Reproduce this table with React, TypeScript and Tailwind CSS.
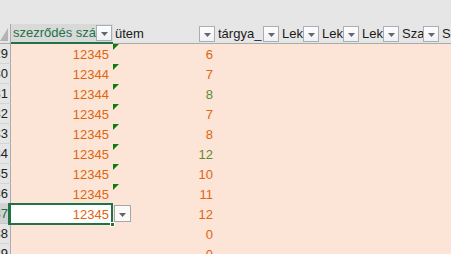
import React from 'react'

type Row = {
  num: number
  a?: string
  b: string
  bGreen?: boolean
  flag?: boolean
  selected?: boolean
}

const rows: Row[] = [
  { num: 29, a: '12345', b: '6', flag: true },
  { num: 30, a: '12344', b: '7', flag: true },
  { num: 31, a: '12344', b: '8', bGreen: true, flag: true },
  { num: 32, a: '12345', b: '7', flag: true },
  { num: 33, a: '12345', b: '8', flag: true },
  { num: 34, a: '12345', b: '12', bGreen: true, flag: true },
  { num: 35, a: '12345', b: '10', flag: true },
  { num: 36, a: '12345', b: '11', flag: true },
  { num: 37, a: '12345', b: '12', selected: true },
  { num: 38, b: '0' },
  { num: 39, b: '0' },
]

const headers = [
  { label: 'ütem', w: 'w-[103px]' },
  { label: 'tárgya_', w: 'w-[64px]' },
  { label: 'Lek', w: 'w-[40px]' },
  { label: 'Lek', w: 'w-[40px]' },
  { label: 'Lek', w: 'w-[40px]' },
  { label: 'Sza', w: 'w-[40px]' },
  { label: 'Sza', w: 'w-[40px]' },
]

const Arrow = () => (
  <svg width="7" height="4" viewBox="0 0 7 4" className="mt-[2px]">
    <polygon points="0,0 7,0 3.5,4" fill="#666666" />
  </svg>
)

const FilterButton = () => (
  <div className="flex h-[16px] w-[16px] shrink-0 items-center justify-center border border-[#a9adb4] bg-gradient-to-b from-[#fdfdfe] to-[#eef1f6]">
    <Arrow />
  </div>
)

export default function App() {
  return (
    <div
      className="h-[254px] w-[451px] overflow-hidden bg-[#e6e6e6] text-[13px] leading-none"
      style={{ fontFamily: '"Liberation Sans", Arial, sans-serif' }}
    >
      {/* strip above the table header */}
      <div className="h-[24px]" />

      {/* table header row */}
      <div className="flex h-[20px] whitespace-nowrap">
        <div className="flex w-[11px] shrink-0 items-end border-b border-r border-[#ababab] pb-[2px]">
          <svg width="8" height="13" viewBox="0 0 8 13">
            <polygon points="8,0 8,13 0,13" fill="#b4b4b4" />
          </svg>
        </div>
        <div className="flex w-[102px] shrink-0 items-center border-b-2 border-[#217346] bg-[#d9d9d9] pl-[2px] pr-[1px] text-[#217346]">
          <span className="min-w-0 flex-1 overflow-hidden leading-[18px]">szezrődés szá</span>
          <FilterButton />
        </div>
        {headers.map((h, i) => (
          <div
            key={i}
            className={`flex ${h.w} shrink-0 items-center border-b border-[#ababab] pl-[2px] pr-[1px] text-[#1a1a1a]`}
          >
            <span className="min-w-0 flex-1 overflow-hidden leading-[18px]">{h.label}</span>
            <FilterButton />
          </div>
        ))}
      </div>

      {/* data rows */}
      {rows.map((r) => (
        <div key={r.num} className="flex h-[20px]">
          <div
            className={`flex w-[11px] shrink-0 items-center justify-end overflow-hidden border-b border-r pr-[2px] ${
              r.selected
                ? 'border-b-[#c6c6c6] border-r-[#217346] bg-[#d2d2d2] text-[#217346]'
                : 'border-b-[#d4d4d4] border-r-[#ababab] text-[#222222]'
            }`}
          >
            {r.num}
          </div>
          <div className="flex flex-1 bg-[#fce4d6]">
            <div className={`relative flex w-[102px] shrink-0 items-center justify-end pr-[4px] text-[#e0650f] ${r.selected ? 'bg-white' : ''}`}>
              {r.a}
              {r.selected && (
                <>
                  <div className="pointer-events-none absolute -bottom-[1px] -left-[3px] -top-[1px] right-0 border-2 border-[#217346]" />
                  <div className="absolute -bottom-[3px] -right-[2px] h-[5px] w-[5px] border border-white bg-[#217346]" />
                </>
              )}
            </div>
            <div
              className={`relative flex w-[103px] shrink-0 items-center justify-end pr-[3px] ${
                r.bGreen ? 'text-[#5d8a32]' : 'text-[#e0650f]'
              }`}
            >
              {r.flag && (
                <svg width="6" height="6" viewBox="0 0 6 6" className="absolute left-0 top-0">
                  <polygon points="0,0 6,0 0,6" fill="#107c10" />
                </svg>
              )}
              {r.selected && (
                <div className="absolute left-[1px] top-[1px] flex h-[17px] w-[17px] items-center justify-center border border-[#a6a6a6] bg-[#fafafa]">
                  <Arrow />
                </div>
              )}
              {r.b}
            </div>
          </div>
        </div>
      ))}
    </div>
  )
}
